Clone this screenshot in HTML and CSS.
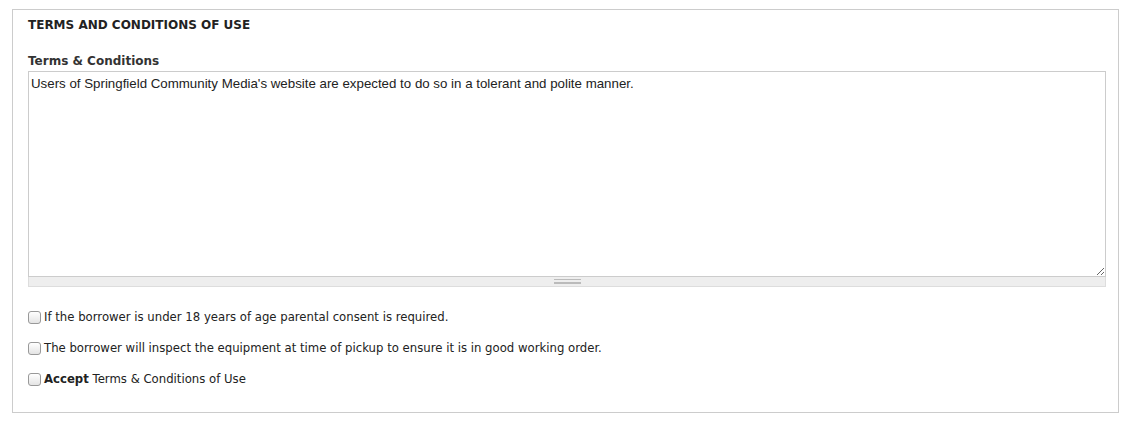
FILE: index.html
```html
<!DOCTYPE html>
<html lang="en">
<head>
<meta charset="utf-8"/>
<meta content="width=device-width, initial-scale=1.0" name="viewport"/>
<title>Terms and Conditions of Use</title>
<link rel="stylesheet" href="styles.css">
</head>
<body>
<fieldset class="panel">
  <div class="panel-title">TERMS AND CONDITIONS OF USE</div>
  <div class="form-item">
    <label class="field-label" for="terms">Terms &amp; Conditions</label>
    <div class="resizable">
      <textarea id="terms" rows="12">Users of Springfield Community Media's website are expected to do so in a tolerant and polite manner.</textarea>
      <div class="grippie"></div>
    </div>
  </div>
  <div class="checks">
    <label class="check"><input type="checkbox"/><span>If the borrower is under 18 years of age parental consent is required.</span></label>
    <label class="check"><input type="checkbox"/><span>The borrower will inspect the equipment at time of pickup to ensure it is in good working order.</span></label>
    <label class="check"><input type="checkbox"/><span><strong>Accept</strong> Terms &amp; Conditions of Use</span></label>
  </div>
</fieldset>
</body>
</html>
```

FILE: styles.css
```css
  body {
    margin: 0;
    padding: 9px 10px 0 12px;
    background-color: #ffffff;
    font-family: 'DejaVu Sans', 'Liberation Sans', sans-serif;
    color: #222;
  }
  .panel {
    margin: 0;
    width: 1106px;
    height: 404px;
    box-sizing: border-box;
    padding: 7px 12px 0 15px;
    border: 1px solid #cccccc;
  }
  .panel-title {
    font-size: 12px;
    font-weight: bold;
    line-height: 16px;
    color: #222;
  }
  .form-item {
    margin-top: 20px;
  }
  .field-label {
    display: block;
    font-size: 12px;
    font-weight: bold;
    line-height: 16px;
    margin-bottom: 2px;
    color: #333;
  }
  .resizable {
    width: 1078px;
  }
  textarea {
    display: block;
    width: 100%;
    height: 206px;
    box-sizing: border-box;
    margin: 0;
    padding: 4px 2px;
    border: 1px solid #cccccc;
    font-family: 'Liberation Sans', Arial, sans-serif;
    font-size: 13.3px;
    line-height: 16px;
    color: #222;
    resize: vertical;
    outline: none;
  }
  .grippie {
    height: 9px;
    background: #eeeeee;
    border: 1px solid #dddddd;
    border-top: none;
    display: flex;
    justify-content: center;
    align-items: center;
  }
  .grippie::before {
    content: "";
    width: 27px;
    height: 5px;
    border-top: 1px solid #bbbbbb;
    border-bottom: 1px solid #bbbbbb;
    background: linear-gradient(#fff0 2px, #bbbbbb 2px, #bbbbbb 3px, #fff0 3px);
    box-sizing: border-box;
  }
  .checks {
    margin-top: 22px;
    display: flex;
    flex-direction: column;
    gap: 15px;
  }
  .check {
    display: flex;
    align-items: center;
    gap: 3px;
    font-size: 11.7px;
    line-height: 16px;
    color: #222;
  }
  .check input {
    appearance: none;
    -webkit-appearance: none;
    width: 13px;
    height: 13px;
    margin: 0;
    border: 1px solid #999999;
    border-radius: 3px;
    background: linear-gradient(#ffffff, #e4e4e4);
    box-sizing: border-box;
  }
```
